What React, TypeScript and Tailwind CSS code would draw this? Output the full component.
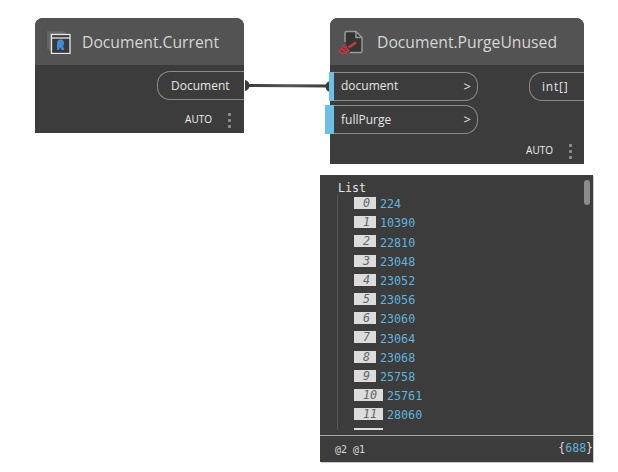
const rows = [
  ['0', '224'],
  ['1', '10390'],
  ['2', '22810'],
  ['3', '23048'],
  ['4', '23052'],
  ['5', '23056'],
  ['6', '23060'],
  ['7', '23064'],
  ['8', '23068'],
  ['9', '25758'],
  ['10', '25761'],
  ['11', '28060'],
];

const Dots = () => (
  <div className="flex flex-col gap-[3px] mt-[2px]">
    <span className="w-[3px] h-[3px] rounded-[1px] bg-[#8f8f8f]" />
    <span className="w-[3px] h-[3px] rounded-[1px] bg-[#8f8f8f]" />
    <span className="w-[3px] h-[3px] rounded-[1px] bg-[#8f8f8f]" />
  </div>
);

const CurrentIcon = () => (
  <svg width="24" height="24" viewBox="0 0 24 24" fill="none">
    <rect x="0" y="1" width="17" height="18" rx="1" fill="#626262" />
    <rect x="2" y="2.500" width="17" height="18" rx="1" fill="#6e6e6e" />
    <rect x="4.500" y="4.500" width="18.500" height="19" fill="#3a3a3a" stroke="#e8e8e8" strokeWidth="1.300" />
    <path d="M4.500 8h18.500" stroke="#e8e8e8" strokeWidth="1.300" />
    <path d="M10 20v-7a3.500 3.500 0 0 1 7 0c0 1.300-.5 2-1 2.700l1.300 4.300h-2.600l-1.700-3-1 3z" fill="#3b8fd9" />
  </svg>
);

const PurgeIcon = () => (
  <svg width="26" height="28" viewBox="0 0 26 28" fill="none" className="overflow-visible">
    <path d="M7 14V5a1.500 1.500 0 0 1 1.500-1.500H18l6 6v13.500a1.500 1.500 0 0 1-1.500 1.500H12" stroke="#9a9a9a" strokeWidth="1.500" fill="#343434" />
    <path d="M18 3.500v6h6" stroke="#9a9a9a" strokeWidth="1.500" />
    <path d="M18 14.500l-7.500 5" stroke="#b23a40" strokeWidth="2.800" />
    <path d="M5.500 16.500l6.500 6-2.500 1.500-1 2-2-.5-1.500 1.500-2.500-2-2.500-2 2-1.500 1-2z" fill="#b23a40" />
    <path d="M5 19.500l3.500 3.500M3 22l2.500 2.500" stroke="#5e2528" strokeWidth="1" />
  </svg>
);

const InputPort = ({ label, top, barClass, textClass }: { label: string; top: string; barClass: string; textClass?: string }) => (
  <div className={`absolute left-0 flex ${top} h-[29px]`}>
    <div className={`bg-[#6ac0e7] ${barClass}`} />
    <div className="w-[144px] border border-l-0 border-[#8a8a8a] rounded-r-[13px] flex items-center justify-between pl-[7px] pr-[6px] text-[12px] text-[#e4e4e4]">
      <span className={textClass}>{label}</span>
      <span className="text-[13px]">&gt;</span>
    </div>
  </div>
);

export default function App() {
  return (
    <div className="relative w-[618px] h-[472px] bg-white overflow-hidden font-['Open_Sans',sans-serif]">
      {/* wire */}
      <svg className="absolute left-[240px] top-[76px]" width="95" height="20" viewBox="0 0 95 20" fill="none">
        <defs>
          <linearGradient id="wire" gradientUnits="userSpaceOnUse" x1="5" y1="0" x2="90" y2="0">
            <stop offset="0" stopColor="#3a3a3a" />
            <stop offset="0.5" stopColor="#555555" />
            <stop offset="1" stopColor="#3a3a3a" />
          </linearGradient>
        </defs>
        <path d="M6 9.500L88 10" stroke="url(#wire)" strokeWidth="3" />
        <path d="M5 4c3 .5 4.500 3 4.500 5.500S8 14.500 5 15z" fill="#3a3a3a" />
        <path d="M90 5c-3 .5-4.500 3-4.500 5.500S87 15.500 90 16z" fill="#3a3a3a" />
      </svg>

      {/* Document.Current */}
      <div className="absolute left-[35px] top-[18px] w-[209px] h-[115px] bg-[#3c3c3c] rounded-t-[8px] flex flex-col">
        <div className="h-[47px] bg-[#535353] rounded-t-[8px] flex items-center pl-[12px] gap-[11px]">
          <CurrentIcon />
          <span className="text-[15.7px] pt-[2px] text-[#d6d6d6]">Document.Current</span>
        </div>
        <div className="flex justify-end mt-[6px]">
          <div className="w-[87px] h-[29px] border border-r-0 border-[#8a8a8a] rounded-l-[13px] flex items-center pl-[13px] text-[12px] text-[#e4e4e4]">
            Document
          </div>
        </div>
        <div className="flex justify-end items-center mt-[11px] pr-[13px] gap-[16px]">
          <span className="text-[10px] text-[#f0f0f0]">AUTO</span>
          <Dots />
        </div>
      </div>

      {/* Document.PurgeUnused */}
      <div className="absolute left-[325px] top-[18px] w-[259px] h-[146px]">
        <div className="absolute left-[5px] top-0 w-[254px] h-[146px] bg-[#3c3c3c] rounded-t-[8px] flex flex-col">
          <div className="h-[47px] bg-[#535353] rounded-t-[8px] flex items-center pl-[8px] gap-[13px]">
            <PurgeIcon />
            <span className="text-[15.7px] pt-[2px] text-[#d6d6d6]">Document.PurgeUnused</span>
          </div>
          <div className="flex justify-end mt-[7px]">
            <div className="w-[55px] h-[29px] border border-r-0 border-[#8a8a8a] rounded-l-[13px] flex items-center pl-[12px] text-[12px] tracking-[0.8px] text-[#e4e4e4]">
              int[]
            </div>
          </div>
          <div className="flex justify-end items-center mt-[41px] pr-[12px] gap-[16px]">
            <span className="text-[10px] text-[#f0f0f0]">AUTO</span>
            <Dots />
          </div>
        </div>
        <InputPort label="document" top="top-[54px] ml-[4px]" barClass="w-[5px]" textClass="pb-[2px]" />
        <InputPort label="fullPurge" top="top-[87px]" barClass="w-[9px]" />
      </div>

      {/* preview bubble */}
      <div className="absolute left-[320px] top-[175px] w-[273px] h-[287px] bg-[#3c3c3c] flex flex-col font-['DejaVu_Sans_Mono',monospace] shadow-[1px_1px_0_#cccccc]">
        <div className="relative h-[255px] mb-[5px] overflow-hidden pl-[17px] pt-[6px]">
          <div className="ml-[1px] text-[11.7px] leading-[14px] text-[#e6e6e6]">List</div>
          <div className="absolute left-[264px] top-[5px] w-[6px] h-[25px] rounded-[3px] bg-[#8c8c8c]" />
          <div className="border-l border-[#555555] pl-[16px] pt-[2px] h-[300px]">
            <div className="flex flex-col gap-[7.2px]">
              {rows.map(([i, v]) => (
                <div key={i} className="flex items-center h-[12px] gap-[4px]">
                  <span
                    className={`bg-[#dcdcdc] text-[#666666] italic text-[11.7px] leading-[12px] h-[12px] text-right pr-[6px] ${i.length > 1 ? 'w-[29px]' : 'w-[22px]'}`}
                  >
                    {i}
                  </span>
                  <span className="text-[11.7px] translate-y-[2px] text-[#62b4dc]">{v}</span>
                </div>
              ))}
              <div className="bg-[#dcdcdc] w-[29px] h-[12px] translate-y-[1px]" />
            </div>
          </div>
        </div>
        <div className="flex-1 border-t border-[#a8a8a8] flex items-center justify-between pl-[15px] text-[10px] text-[#d8d8d8]">
          <span>@2 @1</span>
          <span className="text-[11.5px]">
            {'{'}
            <span className="text-[#62b4dc]">688</span>
            {'}'}
          </span>
        </div>
      </div>
    </div>
  );
}
